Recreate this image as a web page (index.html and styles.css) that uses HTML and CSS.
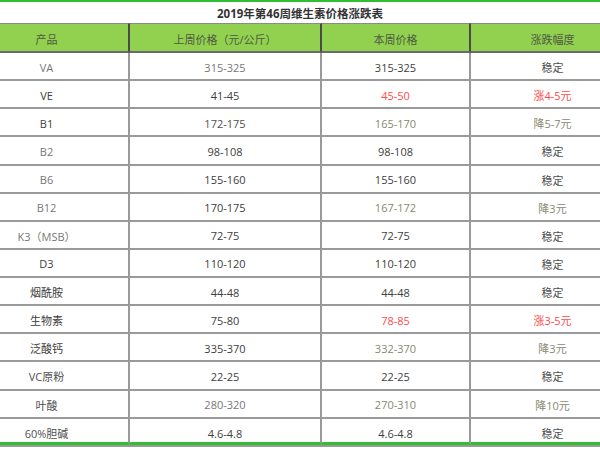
FILE: index.html
```html
<!DOCTYPE html>
<html lang="zh-CN">
<head>
<meta charset="utf-8">
<title>2019年第46周维生素价格涨跌表</title>
<link rel="stylesheet" href="styles.css">
</head>
<body>
<div class="sheet">
  <div class="title">2019年第46周维生素价格涨跌表</div>
  <div class="grid">
    <div class="cell head">产品</div>
    <div class="cell head">上周价格（元/公斤）</div>
    <div class="cell head">本周价格</div>
    <div class="cell head">涨跌幅度</div>

    <div class="cell lt">VA</div><div class="cell lt">315-325</div><div class="cell dk">315-325</div><div class="cell md">稳定</div>
    <div class="cell dk">VE</div><div class="cell dk">41-45</div><div class="cell red">45-50</div><div class="cell red">涨4-5元</div>
    <div class="cell dk">B1</div><div class="cell md">172-175</div><div class="cell ol">165-170</div><div class="cell ol">降5-7元</div>
    <div class="cell lt">B2</div><div class="cell dk">98-108</div><div class="cell dk">98-108</div><div class="cell md">稳定</div>
    <div class="cell lt">B6</div><div class="cell dk">155-160</div><div class="cell dk">155-160</div><div class="cell md">稳定</div>
    <div class="cell lt">B12</div><div class="cell dk">170-175</div><div class="cell ol">167-172</div><div class="cell ol">降3元</div>
    <div class="cell lt">K3（MSB）</div><div class="cell dk">72-75</div><div class="cell dk">72-75</div><div class="cell md">稳定</div>
    <div class="cell dk">D3</div><div class="cell dk">110-120</div><div class="cell dk">110-120</div><div class="cell md">稳定</div>
    <div class="cell dk">烟酰胺</div><div class="cell dk">44-48</div><div class="cell dk">44-48</div><div class="cell md">稳定</div>
    <div class="cell dk">生物素</div><div class="cell dk">75-80</div><div class="cell red">78-85</div><div class="cell red">涨3-5元</div>
    <div class="cell dk">泛酸钙</div><div class="cell dk">335-370</div><div class="cell ol">332-370</div><div class="cell ol">降3元</div>
    <div class="cell md">VC原粉</div><div class="cell dk">22-25</div><div class="cell dk">22-25</div><div class="cell md">稳定</div>
    <div class="cell md">叶酸</div><div class="cell lt">280-320</div><div class="cell ol">270-310</div><div class="cell ol">降10元</div>
    <div class="cell md last">60%胆碱</div><div class="cell dk last">4.6-4.8</div><div class="cell dk last">4.6-4.8</div><div class="cell md last">稳定</div>
  </div>
</div>
</body>
</html>
```
FILE: styles.css
```css
html, body {
  margin: 0;
  padding: 0;
  background: #ffffff;
}
body {
  width: 600px;
  height: 450px;
  overflow: hidden;
  font-family: "Open Sans", "Noto Sans CJK SC", sans-serif;
  font-size: 11px;
}
.sheet {
  width: 600px;
  border-top: 2px solid #2fbf2f;
  border-bottom: 2px solid #9a9a9a;
}
.title {
  height: 22px;
  display: flex;
  align-items: center;
  justify-content: center;
  font-weight: bold;
  font-size: 11.5px;
  color: #333333;
  border-bottom: 1px solid #8a8a8a;
  box-sizing: border-box;
}
.grid {
  display: grid;
  grid-template-columns: 130px 192px 149px 129px;
  grid-template-rows: 29px repeat(13, 28.14px) 26px;
}
.cell {
  box-sizing: border-box;
  display: flex;
  align-items: center;
  justify-content: center;
  padding-top: 2px;
  border-right: 2px solid #9a9a9a;
  border-bottom: 2px solid #9a9a9a;
  white-space: nowrap;
}
.cell:nth-child(4n+1) {
  padding-right: 35px;
}
.cell:nth-child(4n) {
  border-right: none;
  padding-left: 34px;
}
.head {
  background: #92d050;
  color: #4d5a40;
  border-right-color: #4a4a4a;
  border-bottom-color: #6a6a6a;
  border-top: 1px solid #8a8a8a;
  margin-top: -1px;
}
.last {
  border-bottom: 3px solid #2fbf2f;
  padding-top: 6px;
}
.dk { color: #404040; }
.md { color: #505050; }
.lt { color: #777777; }
.ol { color: #88886f; }
.red { color: #ff4a4a; }
```
